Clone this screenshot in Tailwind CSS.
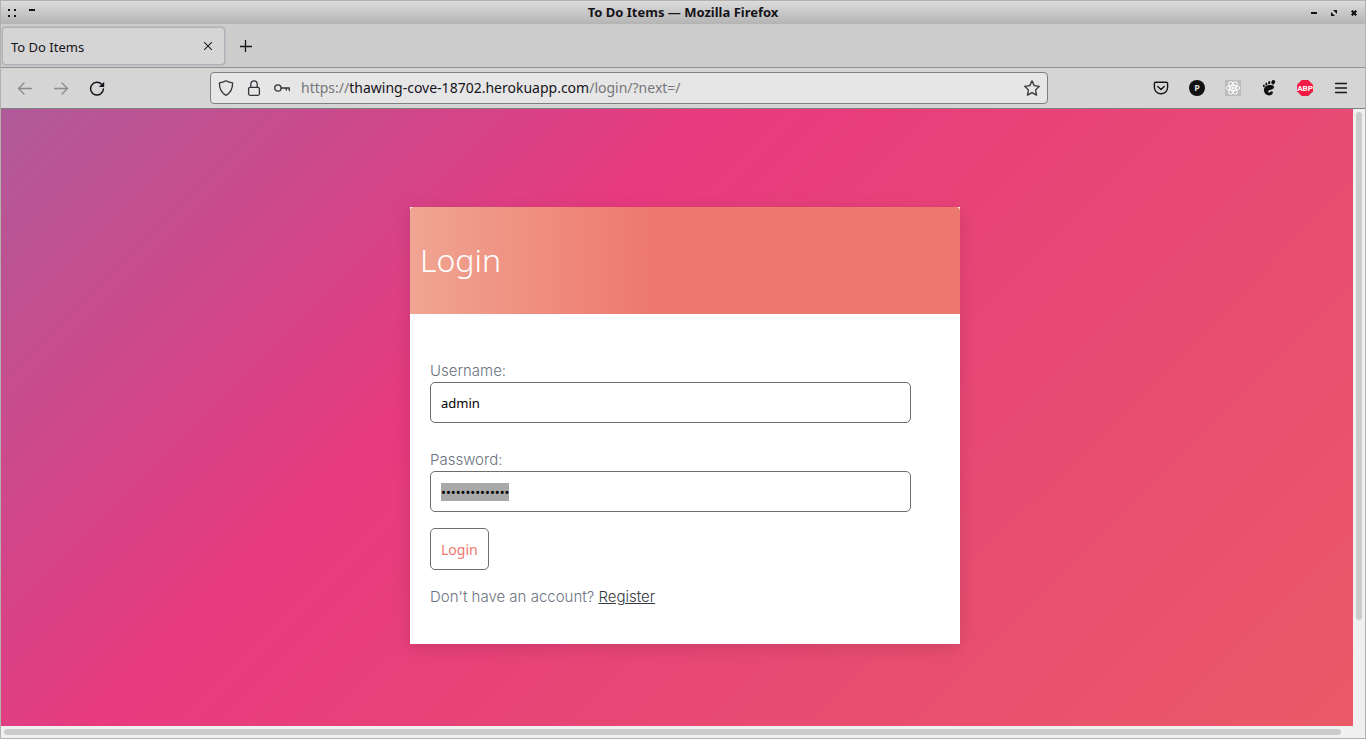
<!DOCTYPE html>
<html lang="en">
<head>
<meta charset="utf-8">
<meta name="viewport" content="width=device-width, initial-scale=1">
<title>To Do Items</title>
<script src="https://cdn.jsdelivr.net/npm/@tailwindcss/browser@4"></script>
</head>
<body class="flex h-screen flex-col overflow-hidden border border-[#b3b0ae] bg-[#f0f0f0] font-['Noto_Sans',sans-serif] text-[#15141a]">

<!-- Window title bar -->
<header class="grid h-[23px] shrink-0 grid-cols-[1fr_auto_1fr] items-center bg-linear-to-b from-[#dcdcdc] to-[#b4b4b4]">
  <div class="flex items-center gap-3 pl-[7px]">
    <button aria-label="Window menu"><svg class="block size-2" viewBox="0 0 8 8" fill="#111"><path d="M0 0h2v2H0zM6 0h2v2H6zM0 6h2v2H0zM6 6h2v2H6z"/></svg></button>
    <button aria-label="Shade"><svg class="block h-2 w-2" viewBox="0 0 8 8" fill="#111"><path d="M1 0h6v2H1z"/></svg></button>
  </div>
  <h1 class="pb-0.5 text-[13px] leading-5 font-bold">To Do Items — Mozilla Firefox</h1>
  <div class="flex items-center justify-end gap-[14px] pr-2">
    <button aria-label="Minimize"><svg class="block size-[6px]" viewBox="0 0 6 6" fill="#111"><path d="M0 2h6v2H0z"/></svg></button>
    <button aria-label="Maximize"><svg class="block size-[6px]" viewBox="0 0 6 6" fill="#111"><path d="M2 0h4v4zM0 2l4 4H0z"/></svg></button>
    <button aria-label="Close window"><svg class="block size-[6px]" viewBox="0 0 6 6"><path d="M.7.7l4.600 4.600M5.300.7L.7 5.300" stroke="#111" stroke-width="2.200"/></svg></button>
  </div>
</header>

<!-- Tabs -->
<nav class="flex h-[44px] shrink-0 items-start border-b border-[#919191] bg-[#cdcdcd] pt-[3px] pl-[1px]">
  <div class="flex h-[38px] w-[223px] items-center justify-between rounded border border-[#b1b1ba] bg-[#d5d5d5] pr-3 pl-2 shadow-[0_0_2px_#9a9aa8]">
    <a href="#" class="pt-0.5 text-[13px] leading-5">To Do Items</a>
    <button aria-label="Close tab"><svg class="block size-2" viewBox="0 0 8 8" fill="none" stroke="#222" stroke-width="1.100"><path d="M0 0l8 8M8 0L0 8"/></svg></button>
  </div>
  <button aria-label="New tab" class="mt-[13px] ml-[15px]"><svg class="block size-3" viewBox="0 0 12 12" fill="none" stroke="#15141a" stroke-width="1.300"><path d="M5.500 0v12M0 6.500h12"/></svg></button>
</nav>

<!-- Navigation toolbar -->
<div class="flex h-[41px] shrink-0 items-center border-b border-[#7f7f7f] bg-[#d5d5d5] pr-4 pl-4">
  <div class="flex w-[193px] shrink-0 gap-5">
    <button aria-label="Back"><svg class="block size-4" viewBox="0 0 16 16" fill="none" stroke="#8b8b8d" stroke-width="1.300" stroke-linecap="round" stroke-linejoin="round"><path d="M14.500 8.500h-13M7 3L1.500 8.500 7 14"/></svg></button>
    <button aria-label="Forward"><svg class="block size-4" viewBox="0 0 16 16" fill="none" stroke="#8b8b8d" stroke-width="1.300" stroke-linecap="round" stroke-linejoin="round"><path d="M1.500 8.500h13M9 3L14.500 8.500 9 14"/></svg></button>
    <button aria-label="Reload"><svg class="block size-4" viewBox="0 0 16 16"><path d="M12.600 4.200A6.400 6.400 0 1 0 14.400 9" fill="none" stroke="#15141a" stroke-width="1.500" stroke-linecap="round"/><path d="M15.200 1.700v5.300H9.800z" fill="#15141a"/></svg></button>
  </div>
  <div class="flex h-8 w-[838px] min-w-0 items-center gap-3 rounded border border-[#7f7f7f] bg-[#e6e6e6] px-[7px]">
    <svg class="size-4 shrink-0" viewBox="0 0 16 16" fill="none" stroke="#33333a" stroke-width="1.300" stroke-linejoin="round"><path d="M8 .8c2 1.200 4.300 1.900 6.600 2.100C14.700 8 13.400 12.600 8 15.300 2.600 12.600 1.300 8 1.400 2.900 3.700 2.700 6 2 8 .8z"/></svg>
    <svg class="size-4 shrink-0" viewBox="0 0 16 16" fill="none" stroke="#33333a" stroke-width="1.300"><rect x="2.600" y="7.300" width="10.800" height="8" rx="1.500"/><path d="M4.800 7.300V4a3.200 3.200 0 0 1 6.400 0v3.300"/></svg>
    <svg class="size-4 shrink-0" viewBox="0 0 16 16" fill="none" stroke="#33333a" stroke-width="1.300" stroke-linejoin="round" stroke-linecap="round"><circle cx="3.900" cy="8" r="3.200"/><path d="M7.100 8h8.200v2.500M12.300 8v2"/></svg>
    <div role="textbox" aria-label="Address" contenteditable="true" class="-ml-px min-w-0 flex-1 truncate text-[14px] leading-6 text-[#77777a]">https://<span class="text-[#15141a]">thawing-cove-18702.herokuapp.com</span>/login/?next=/</div>
    <button aria-label="Bookmark this page"><svg class="block size-4" viewBox="0 0 16 16" fill="none" stroke="#33333a" stroke-width="1.300" stroke-linejoin="round"><path d="M8 .9l2.200 4.700 5.100.7-3.700 3.600.9 5.200L8 12.600l-4.500 2.500.9-5.200L.7 6.300l5.100-.7z"/></svg></button>
  </div>
  <div class="ml-auto flex shrink-0 gap-5">
    <button aria-label="Save to Pocket"><svg class="block size-4" viewBox="0 0 16 16" fill="none" stroke="#15141a" stroke-width="1.400" stroke-linecap="round" stroke-linejoin="round"><path d="M2.700 2.200h10.600a1.300 1.300 0 0 1 1.300 1.300V7.500a6.600 6.300 0 0 1-13.200 0V3.500a1.300 1.300 0 0 1 1.300-1.300z"/><path d="M4.800 6.400L8 9.400l3.200-3"/></svg></button>
    <button aria-label="P extension" class="size-4 rounded-full bg-[#111] text-[9px] leading-4 font-bold text-[#ddd]">P</button>
    <button aria-label="React developer tools"><svg class="block size-4" viewBox="0 0 16 16" fill="none" stroke="#fff" stroke-width="1"><path d="M0 0h16v16H0z" fill="#bcbcbc" stroke="none"/><ellipse cx="8" cy="8" rx="6.800" ry="2.600"/><ellipse cx="8" cy="8" rx="6.800" ry="2.600" transform="rotate(60 8 8)"/><ellipse cx="8" cy="8" rx="6.800" ry="2.600" transform="rotate(120 8 8)"/><circle cx="8" cy="8" r="1" fill="#fff"/></svg></button>
    <button aria-label="GNOME extension"><svg class="block size-4" viewBox="0 0 16 16" fill="#111"><path d="M10.200 5.100C6 4.800 2.600 7 2.900 10.500c.3 3.300 3 5.100 5.400 4.900 2.200-.2 3.900-1.900 3.500-3.400-.4-1.400-1.700-.7-2.500 0-.9.800-2.200.4-2.200-.6 0-1.700 6-1.500 5.900-4.300 0-1.300-1.200-1.900-2.800-2z"/><ellipse cx="12.200" cy="2.300" rx="1.800" ry="2.200" transform="rotate(25 12.200 2.300)"/><ellipse cx="8.200" cy="2.600" rx="1.100" ry="1.700" transform="rotate(10 8.200 2.600)"/><ellipse cx="5.300" cy="4" rx="1" ry="1.500"/><ellipse cx="2.900" cy="5.900" rx=".9" ry="1.300" transform="rotate(-15 2.900 5.900)"/></svg></button>
    <button aria-label="Adblock Plus"><svg class="block size-4" viewBox="0 0 16 16"><path d="M4.700 0h6.600L16 4.700v6.600L11.300 16H4.700L0 11.300V4.700z" fill="#f21b45"/><text x="8" y="11" text-anchor="middle" font-family="Roboto" font-weight="700" font-size="8" fill="#fff">ABP</text></svg></button>
    <button aria-label="Application menu"><svg class="block size-4" viewBox="0 0 16 16" fill="none" stroke="#15141a" stroke-width="1.300" stroke-linecap="round"><path d="M2.500 3.500h11M2.500 8h11M2.500 12.500h11"/></svg></button>
  </div>
</div>

<!-- Page viewport with its scrollbars -->
<div class="grid min-h-0 flex-1 grid-cols-[1fr_12px] grid-rows-[1fr_12px]">
  <main class="min-h-0 overflow-hidden bg-[linear-gradient(135deg,#b05a99_0%,#e73a7f_36%,#ea5b66_102%)] pt-[98px] pl-4">
    <section class="mx-auto w-[550px] max-w-full bg-white pb-9 shadow-[0_4px_16px_rgba(0,0,0,0.13)]">
      <div class="flex h-[107px] items-center rounded-t bg-linear-to-r from-[#f0a592] to-[#ed786e] to-44% pl-[10px]">
        <h2 class="pb-0.5 font-['Noto_Sans',sans-serif] text-[32px] leading-10 font-light text-white">Login</h2>
      </div>
      <form class="flex flex-col items-start pt-[45px] pr-[49px] pl-5 font-['Inter','Noto_Sans',sans-serif] text-[15px] leading-[23px] font-light text-[#6b7280]">
        <label for="username">Username:</label>
        <input id="username" type="text" value="admin" autocomplete="off" spellcheck="false" class="h-[41px] w-full rounded-[5px] border border-[#6e6e6e] bg-white px-[10px] font-['Noto_Sans',sans-serif] text-[13px] font-normal text-black outline-none">
        <label for="password" class="mt-[25px]">Password:</label>
        <input id="password" type="password" value="passwordsecret" class="h-[41px] w-full rounded-[5px] border border-[#6e6e6e] bg-white px-[10px] font-['Noto_Sans',sans-serif] text-[13px] font-normal text-black outline-none selection:bg-[#a9a9a9] selection:text-black">
        <button type="button" class="mt-4 h-[42px] rounded-[5px] border border-[#6e6e6e] bg-white px-[10px] font-['Noto_Sans',sans-serif] text-[14px] font-normal text-[#ed786e]">Login</button>
        <p class="mt-[15px]">Don't have an account? <a href="#" class="text-[#343a40] underline">Register</a></p>
      </form>
    </section>
  </main>
  <div class="px-[3px] pt-[3px]"><div class="h-[508px] max-h-full w-[6px] rounded-full bg-[#cbcbcb]"></div></div>
  <div class="flex items-center pr-3 pl-[3px]"><div class="h-[6px] w-full rounded-full bg-[#cbcbcb]"></div></div>
</div>

<script>
  const field = document.getElementById('password');
  field.focus();
  field.select();
</script>
</body>
</html>
